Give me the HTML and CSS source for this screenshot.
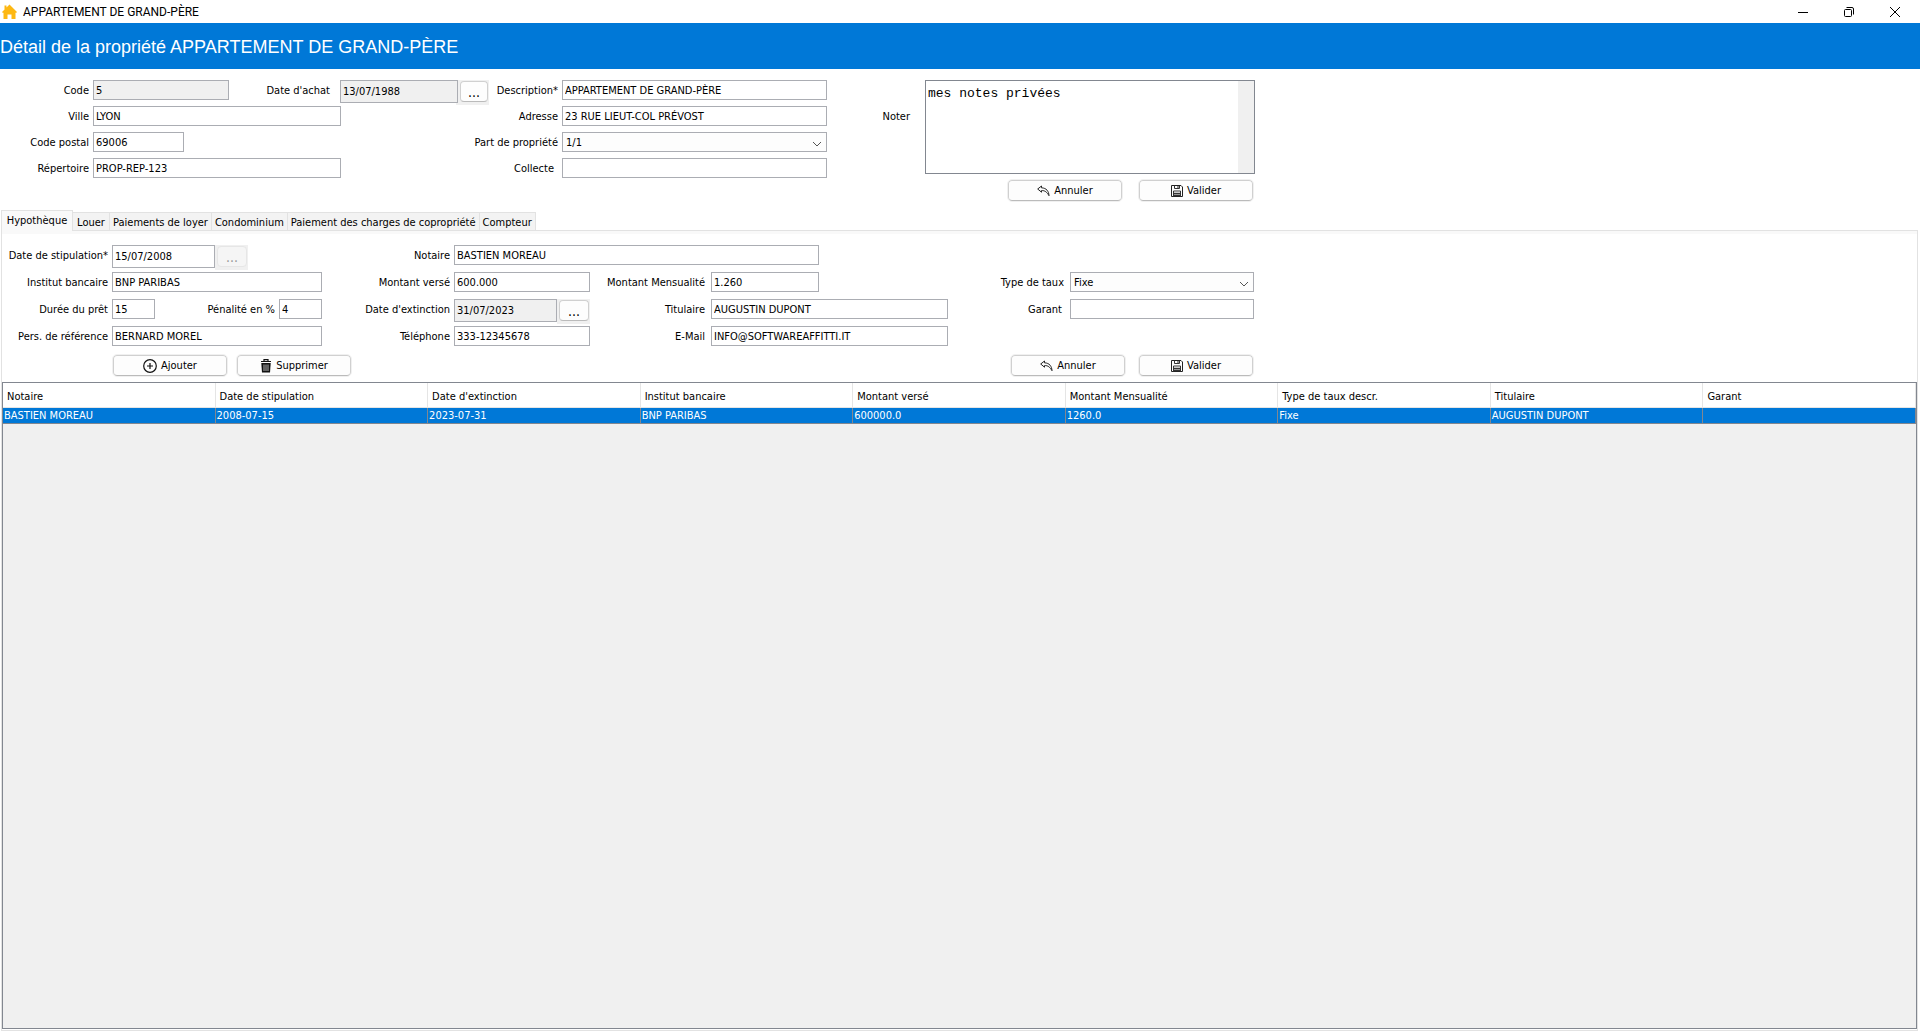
FILE: index.html
```html
<!DOCTYPE html>
<html lang="fr">
<head>
<meta charset="utf-8">
<title>APPARTEMENT DE GRAND-PÈRE</title>
<link rel="stylesheet" href="styles.css">
</head>
<body>
<svg class="sprite" aria-hidden="true">
  <symbol id="undo" viewBox="0 0 13 12"><path d="M4.500 1 .700 4 4.500 7.200V5.600C8 5.300 10 7.300 12 10.700 11.800 6.300 9.500 3 4.500 2.800Z" fill="none" stroke="#222"/></symbol>
  <symbol id="save" viewBox="0 0 12 12"><path d="M.5.500H10L11.500 2V11.500H.5Z" fill="none" stroke="#222"/><path d="M3.500.500V3.500H8.500V.500M2.500 11.500V6H9.500V11.500" fill="none" stroke="#333"/><path d="M3 8.500H9M3 10.500H9" stroke="#333" stroke-width="1.300"/><path d="M7 1V3" stroke="#222"/></symbol>
  <symbol id="add" viewBox="0 0 14 14"><circle cx="7" cy="7" r="6.300" fill="none" stroke="#111" stroke-width="1.200"/><path d="M7 4V10M4 7H10" stroke="#111" stroke-width="1.200"/></symbol>
  <symbol id="trash" viewBox="0 0 12 14"><path d="M1 2.500H11M4 2V.700H8V2" fill="none" stroke="#111" stroke-width="1.200"/><path d="M1.300 4H10.700L10 13.500H2Z" fill="#111"/><path d="M4 5.500V12M6 5.500V12M8 5.500V12" stroke="#ddd" stroke-width=".8"/></symbol>
</svg>

<header class="titlebar">
  <svg class="home" width="16" height="16" viewBox="0 0 16 16" aria-hidden="true"><path d="M0 8 7.500.500 15 8 14 9 13.500 8.500V15H9.500V10.500H5.500V15H1.500V8.500L1 9ZM2.500 1.500H4.500V4L2.500 6Z" fill="#fdb813"/></svg>
  <span class="window-name">APPARTEMENT DE GRAND-PÈRE</span>
  <div class="window-controls">
    <button aria-label="Réduire"><svg width="12" height="12"><path d="M1 6.500H11" stroke="#000"/></svg></button>
    <button aria-label="Restaurer"><svg width="12" height="12" fill="none" stroke="#000"><rect x="1.500" y="3.500" width="7" height="7" rx="1"/><path d="M3.500 1.500H9Q10.500 1.500 10.500 3V8.500"/></svg></button>
    <button aria-label="Fermer"><svg width="12" height="12"><path d="M1 1 11 11M11 1 1 11" stroke="#000"/></svg></button>
  </div>
</header>

<h1 class="banner">Détail de la propriété APPARTEMENT DE GRAND-PÈRE</h1>

<form class="property">
  <div class="property-grid">
    <label for="code">Code</label><input id="code" value="5" readonly>
    <label class="pad-10" for="achat">Date d'achat</label>
    <div class="date narrow"><input id="achat" value="13/07/1988" readonly><button type="button">...</button></div>
    <label for="desc">Description*</label><input id="desc" value="APPARTEMENT DE GRAND-PÈRE">

    <label for="ville">Ville</label><input class="span-2" id="ville" value="LYON">
    <label class="at-5" for="adresse">Adresse</label><input id="adresse" value="23 RUE LIEUT-COL PRÉVOST">

    <label for="cp">Code postal</label><input class="postal" id="cp" value="69006">
    <label class="at-4" for="part">Part de propriété</label>
    <select id="part"><option>1/1</option></select>

    <label for="rep">Répertoire</label><input class="span-2" id="rep" value="PROP-REP-123">
    <label class="at-5 pad-8" for="collecte">Collecte</label><input id="collecte">
  </div>
  <div class="notes">
    <label class="pad-15" for="noter">Noter</label>
    <textarea id="noter">mes notes privées</textarea>
    <div class="actions">
      <button class="action" type="button"><svg width="13" height="12"><use href="#undo"/></svg>Annuler</button>
      <button class="action" type="button"><svg width="12" height="12"><use href="#save"/></svg>Valider</button>
    </div>
  </div>
</form>

<nav class="tabs">
  <button class="tab selected">Hypothèque</button>
  <button class="tab">Louer</button>
  <button class="tab">Paiements de loyer</button>
  <button class="tab">Condominium</button>
  <button class="tab">Paiement des charges de copropriété</button>
  <button class="tab">Compteur</button>
</nav>

<main class="panel">
  <form class="mortgage">
    <label for="stip">Date de stipulation*</label>
    <div class="date"><input id="stip" value="15/07/2008"><button type="button" disabled>...</button></div>
    <label for="notaire">Notaire</label><input class="span-3 notary" id="notaire" value="BASTIEN MOREAU">

    <label class="at-1" for="banque">Institut bancaire</label><input id="banque" value="BNP PARIBAS">
    <label for="verse">Montant versé</label><input id="verse" value="600.000">
    <label class="pad-7" for="mens">Montant Mensualité</label><input class="monthly" id="mens" value="1.260">
    <label class="pad-7" for="taux">Type de taux</label><select id="taux"><option>Fixe</option></select>

    <label for="duree">Durée du prêt</label>
    <div class="loan"><input id="duree" value="15"><label for="penal">Pénalité en %</label><input id="penal" value="4"></div>
    <label for="ext">Date d'extinction</label>
    <div class="date"><input id="ext" value="31/07/2023" readonly><button type="button">...</button></div>
    <label class="pad-7" for="titulaire">Titulaire</label><input id="titulaire" value="AUGUSTIN DUPONT">
    <label class="pad-8" for="garant">Garant</label><input id="garant">

    <label for="pers">Pers. de référence</label><input id="pers" value="BERNARD MOREL">
    <label for="tel">Téléphone</label><input id="tel" value="333-12345678">
    <label class="pad-7" for="mail">E-Mail</label><input id="mail" value="INFO@SOFTWAREAFFITTI.IT">
  </form>
  <div class="toolbar">
    <div class="edit">
      <button class="action" type="button"><svg width="14" height="14"><use href="#add"/></svg>Ajouter</button>
      <button class="action" type="button"><svg width="12" height="14"><use href="#trash"/></svg>Supprimer</button>
    </div>
    <div class="confirm">
      <button class="action" type="button"><svg width="13" height="12"><use href="#undo"/></svg>Annuler</button>
      <button class="action" type="button"><svg width="12" height="12"><use href="#save"/></svg>Valider</button>
    </div>
  </div>
  <div class="list">
    <table>
      <thead><tr><th>Notaire</th><th>Date de stipulation</th><th>Date d'extinction</th><th>Institut bancaire</th><th>Montant versé</th><th>Montant Mensualité</th><th>Type de taux descr.</th><th>Titulaire</th><th>Garant</th></tr></thead>
      <tbody><tr><td>BASTIEN MOREAU</td><td>2008-07-15</td><td>2023-07-31</td><td>BNP PARIBAS</td><td>600000.0</td><td>1260.0</td><td>Fixe</td><td>AUGUSTIN DUPONT</td><td></td></tr></tbody>
    </table>
  </div>
</main>
</body>
</html>
```
FILE: styles.css
```css
* { box-sizing: border-box; }

body {
  margin: 0;
  min-height: 100vh;
  display: flex;
  flex-direction: column;
  background: #fff;
  color: #000;
  font: 11px/14px "DejaVu Sans Condensed", Tahoma, sans-serif;
}

.sprite { display: none; }

button, input, select, textarea { font: inherit; color: inherit; margin: 0; }

/* window frame */
.titlebar { display: flex; align-items: center; height: 23px; padding: 0 2px; }
.window-name { margin-left: 5px; font: 12px/16px Roboto, "Segoe UI", sans-serif; }
.window-controls { display: flex; margin-left: auto; height: 21px; }
.window-controls button { display: flex; align-items: center; justify-content: center; width: 46px; padding: 0; border: 0; background: none; }

.banner {
  margin: 0;
  height: 46px;
  background: #0078d7;
  color: #fff;
  font: 18px/48px "Liberation Sans", Arial, sans-serif;
}

/* fields */
label { padding-right: 4px; text-align: right; line-height: 21px; white-space: nowrap; }
.pad-7 { padding-right: 6px; }
.pad-8 { padding-right: 8px; }
.pad-10 { padding-right: 10px; }
.pad-15 { padding-right: 15px; }

input, select {
  width: 100%;
  height: 20px;
  padding: 0 2px;
  border: 1px solid #abadb3;
  border-radius: 0;
  background: #fff;
}
input:read-only { background: #f0f0f0; }

select {
  appearance: none;
  padding: 1px 3px 0;
  background: #fdfdfd url("data:image/svg+xml,%3Csvg xmlns='http://www.w3.org/2000/svg' width='10' height='6'%3E%3Cpath d='M1 1 5 5 9 1' fill='none' stroke='%23555'/%3E%3C/svg%3E") no-repeat right 4px bottom 4px;
}

.date { display: flex; width: 136px; height: 25px; padding-right: 1px; background: linear-gradient(#f0f0f0, #f0f0f0) right / 33px 100% no-repeat; }
.date input { flex: 1; min-width: 0; height: 23px; }
.date button { width: 30px; height: 21px; margin: 1px 0 0 2px; padding: 0; border: 1px solid #d0d0d0; border-bottom-color: #bbb; border-radius: 4px; background: #fdfdfd; font-size: 14px; }
.date button:disabled { border-color: #e6e6e6; background: #f5f5f5; color: #999; }
.date.narrow { width: 149px; }
.narrow button { width: 28px; }

.action {
  display: flex;
  align-items: center;
  justify-content: center;
  gap: 4px;
  width: 114px;
  height: 21px;
  padding: 0;
  border: 1px solid #d0d0d0;
  border-bottom-color: #bbb;
  border-radius: 4px;
  background: #fdfdfd;
  outline: 1px solid #f0f0f0;
}

/* property form */
.property { display: flex; height: 141px; padding-top: 11px; }
.property-grid {
  display: grid;
  grid-template-columns: 93px 136px 111px 149px 73px 265px;
  grid-auto-rows: 20px;
  row-gap: 6px;
}
.span-2 { grid-column: span 2; width: 248px; }
.span-3 { grid-column: span 3; }
.at-1 { grid-column: 1; }
.at-4 { grid-column: 4 / span 2; }
.at-5 { grid-column: 5; }
.postal { width: 91px; }

.notes { display: grid; grid-template-columns: 98px 330px; grid-template-rows: 94px 23px; row-gap: 6px; }
.notes label { padding-top: 26px; }
textarea {
  width: 100%;
  padding: 6px 2px;
  border: 1px solid #828790;
  background: linear-gradient(#f0f0f0, #f0f0f0) right / 16px 100% no-repeat #fff;
  font: 13px/14px "Liberation Mono", "Courier New", monospace;
  resize: none;
}
.actions { grid-column: 2; display: flex; justify-content: flex-end; gap: 17px; padding-right: 2px; }

/* tabs */
.tabs { display: flex; align-items: flex-end; height: 20px; padding-left: 1px; }
.tab { min-width: 37px; height: 18px; padding: 2px 3px 0; border: 1px solid #e2e2e2; border-width: 1px 1px 0 0; background: #f3f3f3; white-space: nowrap; }
.tab.selected { position: relative; min-width: 72px; height: 21px; margin-bottom: -1px; padding: 0 2px 1px; border-left-width: 1px; background: #f9f9f9; }

.panel {
  flex: 1;
  display: flex;
  flex-direction: column;
  margin: 0 2px 1px 1px;
  padding-top: 4px;
  border: 1px solid #e2e2e2;
  background: linear-gradient(#f9f9f9, #f9f9f9) top / 100% 3px no-repeat;
}

.mortgage {
  display: grid;
  grid-template-columns: 110px 210px 132px 136px 121px 237px 122px 184px;
  grid-auto-rows: 20px;
  row-gap: 7px;
  padding-top: 10px;
}
.monthly { width: 108px; }
.notary { width: 365px; }
.loan { display: flex; justify-content: space-between; }
.loan input { width: 43px; }
.loan label { flex: 1; }

.toolbar { display: flex; justify-content: space-between; width: 1252px; padding: 9px 1px 6px 111px; }
.edit { display: flex; gap: 10px; }
.confirm { display: flex; gap: 14px; }

/* mortgage list */
.list { flex: 1; border: 1px solid #828790; background: #f0f0f0; margin-bottom: 1px; }
table { width: 100%; table-layout: fixed; border-collapse: separate; border-spacing: 0; }
th, td { padding: 0; font-weight: normal; text-align: left; white-space: nowrap; }
th { height: 25px; padding: 3px 0 0 4px; border-right: 1px solid #e5e5e5; border-bottom: 1px solid #e5e5e5; background: #fff; }
td { height: 16px; padding-left: 1px; border-right: 1px solid #828790; border-bottom: 1px solid #828790; background: #0078d7; color: #fff; }
```
